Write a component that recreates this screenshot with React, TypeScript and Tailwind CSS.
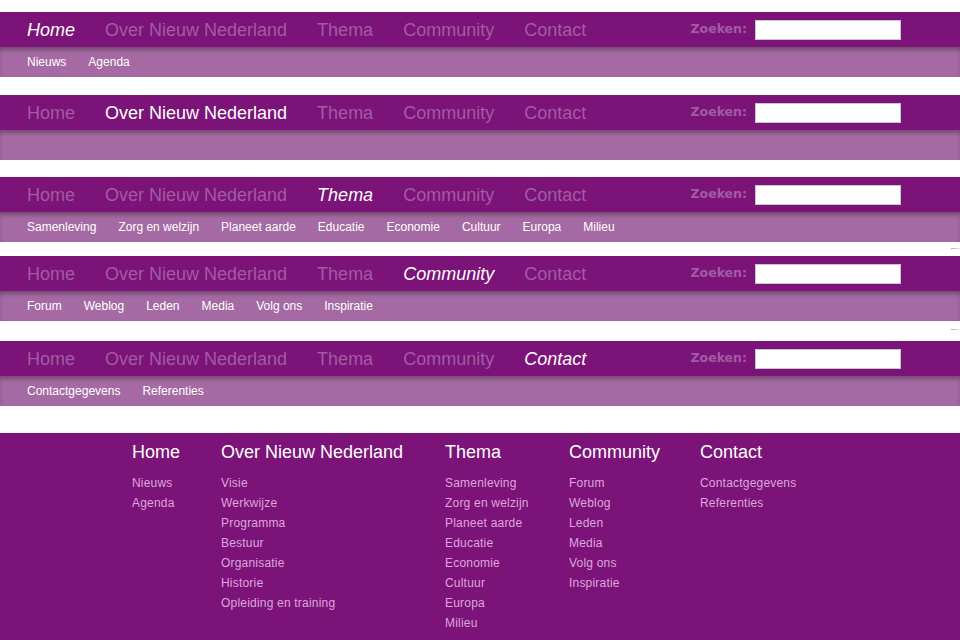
import React from 'react'

type Section = {
  title: string
  links: string[]
}

const sections: Section[] = [
  { title: 'Home', links: ['Nieuws', 'Agenda'] },
  {
    title: 'Over Nieuw Nederland',
    links: ['Visie', 'Werkwijze', 'Programma', 'Bestuur', 'Organisatie', 'Historie', 'Opleiding en training'],
  },
  {
    title: 'Thema',
    links: ['Samenleving', 'Zorg en welzijn', 'Planeet aarde', 'Educatie', 'Economie', 'Cultuur', 'Europa', 'Milieu'],
  },
  { title: 'Community', links: ['Forum', 'Weblog', 'Leden', 'Media', 'Volg ons', 'Inspiratie'] },
  { title: 'Contact', links: ['Contactgegevens', 'Referenties'] },
]

// footer column widths, measured from the layout
const colWidths = ['w-[89px]', 'w-[224px]', 'w-[124px]', 'w-[131px]', 'w-[140px]']

type Mode = 'italic' | 'plain'

function NavBar({ active, mode, sub }: { active: number; mode: Mode; sub: string[] }) {
  return (
    <div>
      <div className="h-[35px] bg-[#7c1378] flex items-center pl-[27px]">
        <ul className="flex items-center gap-[30px] text-[18px] leading-[20px]">
          {sections.map((s, i) => (
            <li
              key={s.title}
              className={
                i === active
                  ? mode === 'italic'
                    ? 'text-white italic'
                    : 'text-white'
                  : 'text-[#a05ca4]'
              }
            >
              {s.title}
            </li>
          ))}
        </ul>
        <div className="ml-auto mr-[59px] flex items-center gap-2">
          <span
            className="text-[12.5px] font-bold text-[#a05ca4]"
            style={{ fontFamily: '"DejaVu Sans", Verdana, sans-serif' }}
          >
            Zoeken:
          </span>
          <input
            type="text"
            className="w-[146px] h-[20px] bg-white border border-[#c4c9cf] outline-none"
          />
        </div>
      </div>
      <div className="h-[30px] bg-[#a56aa3] shadow-[inset_0_4px_4px_-1px_rgba(0,0,0,0.3)] flex items-center pl-[27px]">
        <ul className="flex items-center gap-[22px] text-[12px] text-white">
          {sub.map((l) => (
            <li key={l}>{l}</li>
          ))}
        </ul>
      </div>
    </div>
  )
}

function Dash() {
  return (
    <div className="flex justify-end">
      <div className="w-[9px] h-px bg-gradient-to-r from-[#a8a8a8] to-[#eeeeee]" />
    </div>
  )
}

export default function App() {
  return (
    <div
      className="w-[960px] h-[640px] bg-white overflow-hidden"
      style={{ fontFamily: '"Liberation Sans", Arial, sans-serif' }}
    >
      <div className="h-[12px]" />
      <NavBar active={0} mode="italic" sub={sections[0].links} />
      <div className="h-[18px]" />
      <NavBar active={1} mode="plain" sub={[]} />
      <div className="h-[17px]" />
      <NavBar active={2} mode="italic" sub={sections[2].links} />
      <div className="h-[14px] pt-[6px]">
        <Dash />
      </div>
      <NavBar active={3} mode="italic" sub={sections[3].links} />
      <div className="h-[20px] pt-[8px]">
        <Dash />
      </div>
      <NavBar active={4} mode="italic" sub={sections[4].links} />
      <div className="h-[27px]" />

      {/* Footer sitemap */}
      <footer className="h-[207px] bg-[#7c1378] pl-[132px] pt-[9px] flex">
        {sections.map((s, i) => (
          <div key={s.title} className={colWidths[i]}>
            <h3 className="text-[18px] leading-[20px] text-white whitespace-nowrap">{s.title}</h3>
            <ul className="mt-[11px] text-[12px] leading-[20px] tracking-[0.2px] text-[#dea6de]">
              {s.links.map((l) => (
                <li key={l} className="whitespace-nowrap">
                  {l}
                </li>
              ))}
            </ul>
          </div>
        ))}
      </footer>
    </div>
  )
}
